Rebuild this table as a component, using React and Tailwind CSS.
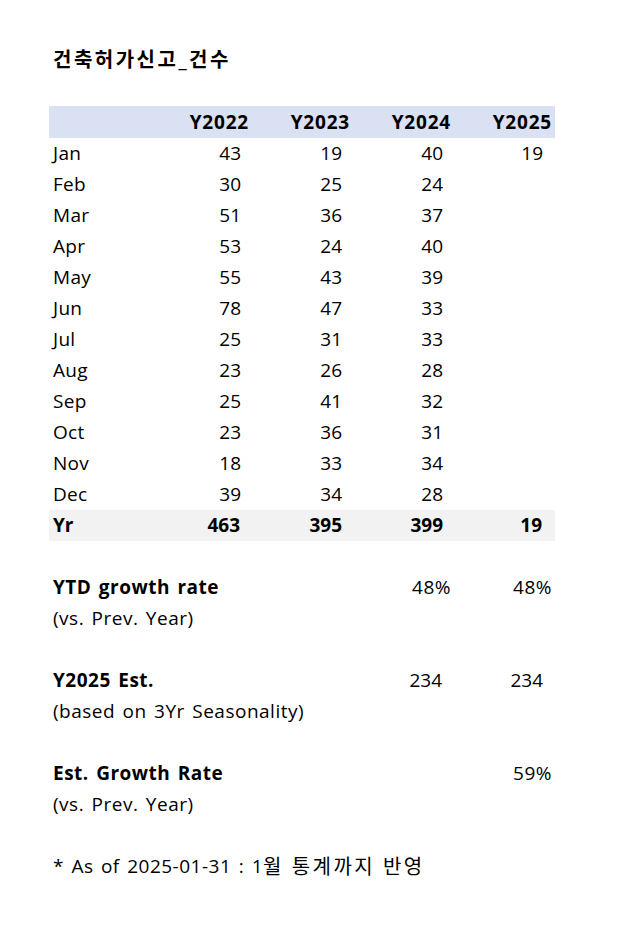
import React from "react";

const rows = [
  ["Jan", "43", "19", "40", "19"],
  ["Feb", "30", "25", "24", ""],
  ["Mar", "51", "36", "37", ""],
  ["Apr", "53", "24", "40", ""],
  ["May", "55", "43", "39", ""],
  ["Jun", "78", "47", "33", ""],
  ["Jul", "25", "31", "33", ""],
  ["Aug", "23", "26", "28", ""],
  ["Sep", "25", "41", "32", ""],
  ["Oct", "23", "36", "31", ""],
  ["Nov", "18", "33", "34", ""],
  ["Dec", "39", "34", "28", ""],
];

const grid = "grid grid-cols-[102px_101px_101px_101px_101px] w-[506px]";
const label = "tracking-[0.5px] [word-spacing:2px]";

export default function App() {
  return (
    <div
      className="min-h-[927px] w-[642px] bg-white text-black pl-[49px] pt-[44px]"
      style={{ fontFamily: '"Open Sans", "Noto Sans CJK KR", sans-serif' }}
    >
      <div className="h-[31px] flex items-center pl-[4px] text-[20px] font-bold leading-none tracking-[2.5px]">
        건축허가신고_건수
      </div>
      <div className="h-[31px]" />
      <div className={`${grid} h-[32px] bg-[#d9e1f2] items-center text-[19px] font-bold leading-none tracking-[0.8px]`}>
        <div />
        <div className="text-right pr-[3px]">Y2022</div>
        <div className="text-right pr-[3px]">Y2023</div>
        <div className="text-right pr-[3px]">Y2024</div>
        <div className="text-right pr-[3px]">Y2025</div>
      </div>
      {rows.map((r) => (
        <div key={r[0]} className={`${grid} h-[31px] items-center text-[19px] leading-none`}>
          <div className="pl-[4px] tracking-[0.3px]">{r[0]}</div>
          <div className="text-right pr-[11px]">{r[1]}</div>
          <div className="text-right pr-[11px]">{r[2]}</div>
          <div className="text-right pr-[11px]">{r[3]}</div>
          <div className="text-right pr-[12px]">{r[4]}</div>
        </div>
      ))}
      <div className={`${grid} h-[31px] bg-[#f2f2f2] items-center text-[19px] font-bold leading-none`}>
        <div className="pl-[4px]">Yr</div>
        <div className="text-right pr-[12px]">463</div>
        <div className="text-right pr-[11px]">395</div>
        <div className="text-right pr-[11px]">399</div>
        <div className="text-right pr-[13px]">19</div>
      </div>
      <div className="h-[31px]" />
      <div className="text-[19px] leading-none">
        <div className={`${grid} h-[31px] items-center`}>
          <div className={`col-span-3 pl-[4px] font-bold whitespace-nowrap ${label}`}>YTD growth rate</div>
          <div className="text-right pr-[3px] tracking-[0.5px]">48%</div>
          <div className="text-right pr-[3px] tracking-[0.5px]">48%</div>
        </div>
        <div className={`h-[31px] flex items-center pl-[4px] ${label}`}>(vs. Prev. Year)</div>
        <div className="h-[31px]" />
        <div className={`${grid} h-[31px] items-center`}>
          <div className={`col-span-3 pl-[4px] font-bold whitespace-nowrap ${label}`}>Y2025 Est.</div>
          <div className="text-right pr-[12px]">234</div>
          <div className="text-right pr-[12px]">234</div>
        </div>
        <div className={`h-[31px] flex items-center pl-[4px] ${label}`}>(based on 3Yr Seasonality)</div>
        <div className="h-[31px]" />
        <div className={`${grid} h-[31px] items-center`}>
          <div className={`col-span-4 pl-[4px] font-bold whitespace-nowrap ${label}`}>Est. Growth Rate</div>
          <div className="text-right pr-[3px] tracking-[0.5px]">59%</div>
        </div>
        <div className={`h-[31px] flex items-center pl-[4px] ${label}`}>(vs. Prev. Year)</div>
        <div className="h-[31px]" />
        <div className={`h-[31px] flex items-center pl-[4px] whitespace-nowrap ${label}`}>
          * As of 2025-01-31 : 1<span className="text-[20px] tracking-[2.5px] [word-spacing:0px]">월 통계까지 반영</span>
        </div>
      </div>
    </div>
  );
}
